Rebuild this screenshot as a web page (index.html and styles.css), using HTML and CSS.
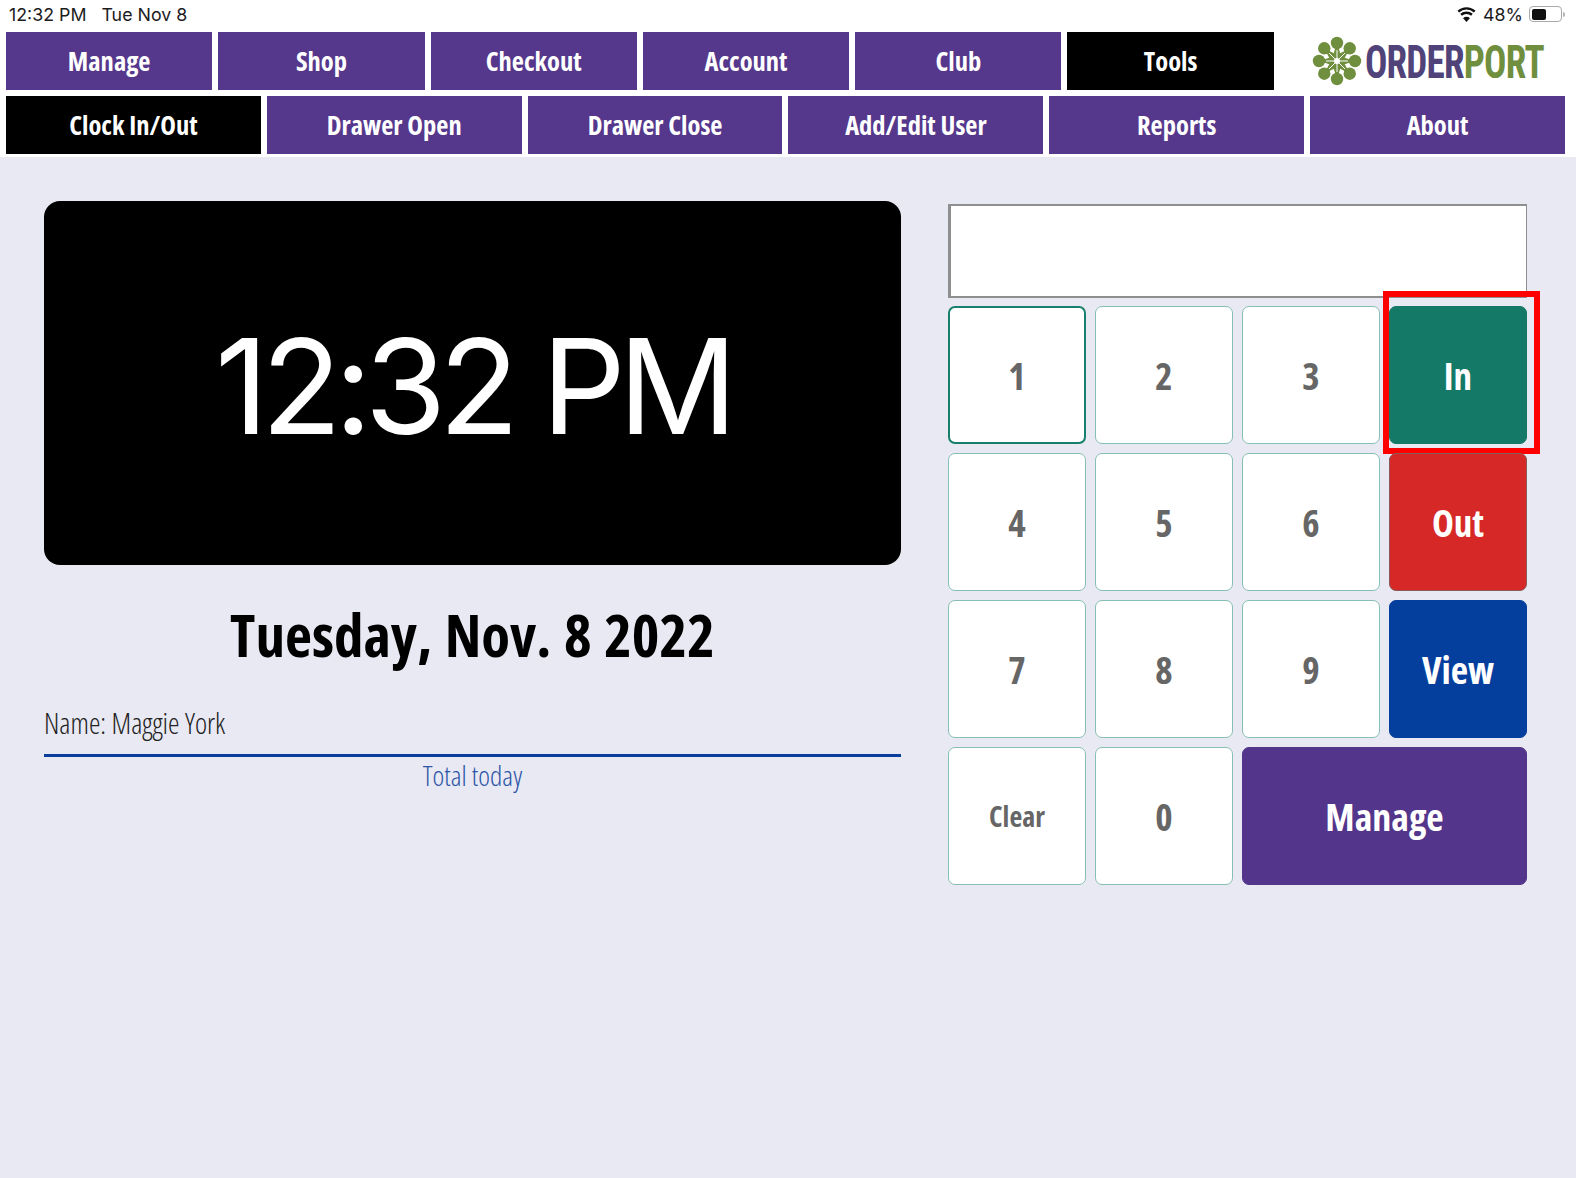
FILE: index.html
```html
<!DOCTYPE html>
<html lang="en">
<head>
    <meta charset="UTF-8">
    <title>Clock In/Out</title>
    <link rel="stylesheet" href="styles.css">
</head>
<body>

<header class="top">
    <div class="status-bar">
        <span class="status-time">12:32 PM&nbsp;&nbsp; Tue Nov 8</span>
        <div class="status-right">
            <svg class="wifi" width="21" height="16" viewBox="2 0 16 15">
                <path d="M10 15l-3.2-3.6a4.6 4.6 0 0 1 6.4 0z" fill="#111"/>
                <path d="M4.9 9.2a7.6 7.6 0 0 1 10.2 0M2.3 6.2a11.4 11.4 0 0 1 15.4 0" fill="none" stroke="#111" stroke-width="2.3" transform="translate(0 -1)"/>
            </svg>
            <span>48%</span>
            <div class="battery"><div class="battery-level"></div></div>
            <div class="battery-cap"></div>
        </div>
    </div>

    <div class="nav-row">
        <nav class="main-tabs">
            <div class="tab">Manage</div>
            <div class="tab">Shop</div>
            <div class="tab">Checkout</div>
            <div class="tab">Account</div>
            <div class="tab">Club</div>
            <div class="tab active">Tools</div>
        </nav>
        <div class="logo">
            <svg class="logo-mark" width="50" height="50" viewBox="-25 -25 50 50">
                <defs>
                    <g id="petal">
                        <circle cx="0" cy="-18" r="6.2"/>
                        <path d="M-1.6 -13L-4.4 -4L0 0L4.4 -4L1.6 -13z"/>
                    </g>
                </defs>
                <g fill="#6f8f3e">
                    <use href="#petal"/>
                    <use href="#petal" transform="rotate(45)"/>
                    <use href="#petal" transform="rotate(90)"/>
                    <use href="#petal" transform="rotate(135)"/>
                    <use href="#petal" transform="rotate(180)"/>
                    <use href="#petal" transform="rotate(225)"/>
                    <use href="#petal" transform="rotate(270)"/>
                    <use href="#petal" transform="rotate(315)"/>
                </g>
                <circle r="3" fill="#fff"/>
                <path d="M0 -11V11M-11 0H11M-8 -8L8 8M-8 8L8 -8" stroke="#fff" stroke-width="1"/>
            </svg>
            <span class="logo-text"><span class="logo-order">ORDER</span><span class="logo-port">PORT</span></span>
        </div>
    </div>

    <nav class="sub-tabs">
        <div class="tab active">Clock In/Out</div>
        <div class="tab">Drawer Open</div>
        <div class="tab">Drawer Close</div>
        <div class="tab">Add/Edit User</div>
        <div class="tab">Reports</div>
        <div class="tab">About</div>
    </nav>
</header>

<main class="content">
    <section class="clock-panel">
        <div class="clock">12:32 PM</div>
        <h2 class="date">Tuesday, Nov. 8 2022</h2>
        <div class="name-line">Name: Maggie York</div>
        <div class="total-today">Total today</div>
    </section>

    <section class="keypad-panel">
        <div class="pin-field"></div>
        <div class="keypad">
            <div class="key key-focus">1</div>
            <div class="key">2</div>
            <div class="key">3</div>
            <div class="key key-in">In<div class="highlight-box"></div></div>
            <div class="key">4</div>
            <div class="key">5</div>
            <div class="key">6</div>
            <div class="key key-out">Out</div>
            <div class="key">7</div>
            <div class="key">8</div>
            <div class="key">9</div>
            <div class="key key-view">View</div>
            <div class="key key-clear">Clear</div>
            <div class="key">0</div>
            <div class="key key-manage">Manage</div>
        </div>
    </section>
</main>

</body>
</html>
```

FILE: styles.css
```css
html, body {
    margin: 0;
    padding: 0;
}

body {
    width: 1576px;
    height: 1178px;
    overflow: hidden;
    background-color: #e8e9f2;
    font-family: "Open Sans", "Liberation Sans", sans-serif;
    font-stretch: 75%;
}

.top {
    background-color: #fff;
    height: 157px;
    padding: 0 11px 0 6px;
    box-sizing: border-box;
}

/* ipad status bar */
.status-bar {
    height: 32px;
    display: flex;
    justify-content: space-between;
    align-items: center;
    font-family: "Inter", "Liberation Sans", sans-serif;
    font-stretch: normal;
    font-size: 17.8px;
    color: #1c1c1e;
    padding: 0 0 4px 3px;
    box-sizing: border-box;
}

.status-right {
    display: flex;
    align-items: center;
    gap: 6px;
}

.battery {
    width: 33px;
    height: 16px;
    box-sizing: border-box;
    border: 1.5px solid #a9a9ad;
    border-radius: 4px;
    padding: 1.5px;
}

.battery-level {
    width: 14px;
    height: 100%;
    background-color: #111;
    border-radius: 2px;
}

.battery-cap {
    width: 2px;
    height: 5px;
    margin-left: -5px;
    background-color: #b5b5b8;
    border-radius: 0 2px 2px 0;
}

.nav-row {
    display: flex;
    justify-content: space-between;
    height: 58px;
    margin-bottom: 6px;
}

.main-tabs {
    display: grid;
    grid-template-columns: repeat(6, 206.3px);
    gap: 6px;
}

.sub-tabs {
    display: grid;
    grid-template-columns: repeat(6, 1fr);
    gap: 6px;
    height: 58px;
}

.tab {
    display: flex;
    align-items: center;
    justify-content: center;
    padding-bottom: 1px;
    box-sizing: border-box;
    background-color: #55378c;
    color: #fff;
    font-size: 26.5px;
    font-weight: 700;
}

.tab.active {
    background-color: #000;
}

.logo {
    display: flex;
    align-items: center;
    gap: 3px;
    padding-right: 23px;
}

.logo-text {
    display: inline-block;
    width: 177px;
    white-space: nowrap;
    transform: scaleX(0.79);
    transform-origin: left center;
    font-family: "Roboto", "Liberation Sans", sans-serif;
    font-stretch: 75%;
    font-size: 47px;
    font-weight: 700;
    letter-spacing: -1px;
}

.logo-order {
    color: #4f4379;
}

.logo-port {
    color: #6f8f3e;
}

.content {
    display: grid;
    grid-template-columns: 857px 579px;
    column-gap: 47px;
    padding: 44px 0 0 44px;
}

.clock {
    display: flex;
    align-items: center;
    justify-content: center;
    height: 364px;
    padding-top: 5px;
    box-sizing: border-box;
    background-color: #000;
    color: #fff;
    border-radius: 16px;
    font-family: "Inter", "Liberation Sans", sans-serif;
    font-stretch: normal;
    font-size: 132px;
    font-weight: 400;
    letter-spacing: -7.5px;
}

.date {
    margin: 34px 0 0;
    text-align: center;
    font-size: 59px;
    word-spacing: 2px;
    line-height: 70px;
    font-weight: 700;
    color: #000;
}

.name-line {
    margin-top: 35px;
    padding-bottom: 12px;
    border-bottom: 3px solid #0a3f9c;
    font-size: 29px;
    line-height: 38px;
    font-weight: 300;
    color: #222;
}

.total-today {
    margin-top: -1px;
    text-align: center;
    font-size: 28px;
    line-height: 38px;
    font-weight: 300;
    color: #2d55a8;
}

.pin-field {
    height: 94px;
    margin-top: 3px;
    box-sizing: border-box;
    background-color: #fff;
    border: 2px solid #8f8f8f;
    border-left-width: 3px;
    border-right-width: 1px;
}

.keypad {
    display: grid;
    grid-template-columns: repeat(4, 138px);
    grid-auto-rows: 138px;
    gap: 9px;
    margin-top: 8px;
}

.key {
    position: relative;
    display: flex;
    align-items: center;
    justify-content: center;
    box-sizing: border-box;
    background-color: #fff;
    border: 1px solid #86bfb3;
    border-radius: 7px;
    color: #666;
    font-size: 37px;
    font-weight: 700;
}

.key-focus {
    border: 2px solid #17806c;
}

.key-clear {
    font-size: 28px;
}

.key-in {
    background-color: #157967;
    border-color: #157967;
    color: #fff;
}

.key-out {
    background-color: #d62826;
    border-color: #8a5a58;
    color: #fff;
}

.key-view {
    background-color: #053f9e;
    border-color: #053f9e;
    color: #fff;
    font-size: 38px;
}

.key-manage {
    grid-column: span 2;
    background-color: #53358b;
    border-color: #53358b;
    color: #fff;
    font-size: 38px;
}

/* red annotation around the In button */
.highlight-box {
    position: absolute;
    top: -16px;
    left: -7px;
    right: -14px;
    bottom: -11px;
    border: 6px solid #fe0000;
}
```
